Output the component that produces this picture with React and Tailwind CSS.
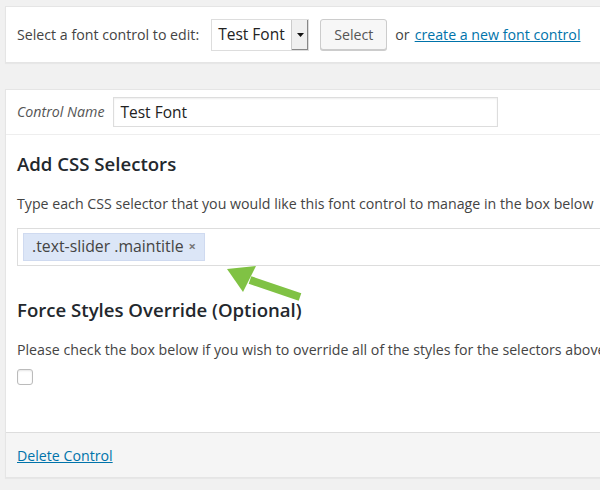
import React from "react";

function Arrow() {
  return (
    <svg className="absolute left-[220px] top-[260px]" width="90" height="45" viewBox="0 0 90 45">
      <path d="M80 37 L30 20" stroke="#80c244" strokeWidth="8" strokeLinecap="butt" />
      <path d="M7 9 L36 6 L23 32 Z" fill="#80c244" />
    </svg>
  );
}

export default function App() {
  return (
    <div className="relative min-h-[490px] overflow-hidden bg-[#f1f1f1] pl-[5px] pt-[6px] text-[14.2px] text-[#444] font-['Open_Sans',sans-serif]">
      {/* picker bar */}
      <div className="flex h-[57px] w-[620px] items-center border border-[#e5e5e5] bg-white pl-[11px] shadow-[0_1px_1px_rgba(0,0,0,0.04)]">
        <span>Select a font control to edit:</span>
        <div className="ml-[12px] flex h-[32px] w-[98px] items-stretch border border-[#ddd] bg-white">
          <span className="flex flex-1 items-center pl-[6px] text-[15.5px] text-[#222]">Test Font</span>
          <span className="flex w-[17px] items-center justify-center border-l border-[#ccc] bg-[#f0f0f0] shadow-[inset_-1px_-1px_0_#888]">
            <svg width="7" height="4" viewBox="0 0 7 4"><path d="M0 0 H7 L3.5 4 Z" fill="#111" /></svg>
          </span>
        </div>
        <button className="ml-[11px] h-[31px] rounded-[3px] border border-[#ccc] bg-[#f7f7f7] px-[13px] text-[14.2px] text-[#555] shadow-[0_1px_0_#ccc]">
          Select
        </button>
        <span className="ml-[8px]">or</span>
        <a href="#" className="ml-[5px] text-[#0073aa] underline">create a new font control</a>
      </div>

      {/* control editor */}
      <div className="mt-[26px] w-[620px] border border-[#e5e5e5] bg-white shadow-[0_1px_1px_rgba(0,0,0,0.04)]">
        <div className="flex h-[45px] items-center border-b border-[#eee] pl-[11px]">
          <span className="italic text-[#555]">Control Name</span>
          <input
            readOnly
            value="Test Font"
            className="ml-[9px] h-[30px] w-[385px] border border-[#ddd] px-[6px] text-[15.5px] text-[#222] shadow-[inset_0_1px_2px_rgba(0,0,0,0.07)] outline-none"
          />
        </div>

        <div className="pl-[11px] pt-[15px]">
          <h2 className="text-[18.6px] font-semibold text-[#23282d]">Add CSS Selectors</h2>
          <p className="mt-[15px] whitespace-nowrap">
            Type each CSS selector that you would like this font control to manage in the box below
          </p>
          <div className="mt-[14px] flex h-[38px] items-center border border-[#ddd] pl-[5px]">
            <span className="flex h-[28px] items-center border border-[#cfdaf0] bg-[#dce6f7] px-[8px] text-[15.8px] text-[#444]">
              .text-slider .maintitle <span className="ml-[5px] text-[13px] font-bold text-[#777]">×</span>
            </span>
          </div>

          <h2 className="mt-[30px] text-[18.6px] font-semibold text-[#23282d]">Force Styles Override (Optional)</h2>
          <p className="mt-[15px] whitespace-nowrap">
            Please check the box below if you wish to override all of the styles for the selectors above
          </p>
          <div className="mt-[9px] h-[16px] w-[16px] rounded-[3px] border border-[#bbb] bg-white shadow-[inset_0_1px_2px_rgba(0,0,0,0.1)]" />
          <div className="h-[47px]" />
        </div>

        <div className="flex h-[45px] items-center border-t border-[#ddd] bg-[#f5f5f5] pl-[11px]">
          <a href="#" className="text-[#0073aa] underline">Delete Control</a>
        </div>
      </div>

      <Arrow />
    </div>
  );
}
